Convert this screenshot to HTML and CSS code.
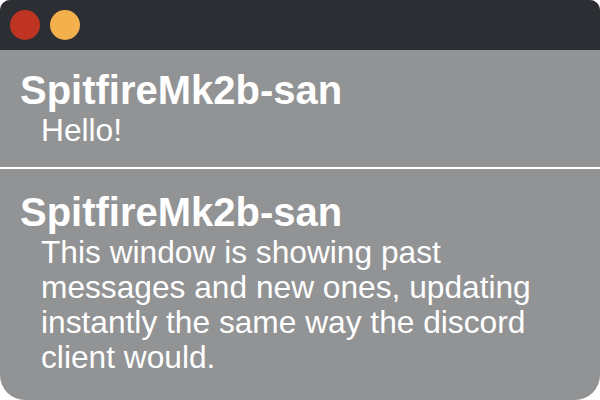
FILE: index.html
```html
<!DOCTYPE html>
<html>
<head>
<meta charset="utf-8">
<link rel="stylesheet" href="styles.css">
</head>
<body>
<div class="window">
  <div class="titlebar">
    <span class="dot dot-red"></span>
    <span class="dot dot-yellow"></span>
  </div>
  <div class="messages">
    <div class="message">
      <div class="author">SpitfireMk2b-san</div>
      <div class="text">Hello!</div>
    </div>
    <div class="message">
      <div class="author">SpitfireMk2b-san</div>
      <div class="text">This window is showing past messages and new ones, updating instantly the same way the discord client would.</div>
    </div>
  </div>
</div>
</body>
</html>
```
FILE: styles.css
```css
html, body {
  margin: 0;
  padding: 0;
  background: #ffffff;
}
.window {
  width: 600px;
  height: 400px;
  display: flex;
  flex-direction: column;
  border-radius: 10px 10px 25px 25px;
  overflow: hidden;
  background: #929395;
  font-family: "Liberation Sans", Arial, sans-serif;
  color: #ffffff;
}
.titlebar {
  height: 50px;
  flex: none;
  background: #2d2e33;
  display: flex;
  align-items: center;
  gap: 10px;
  padding-left: 10px;
}
.dot {
  width: 30px;
  height: 30px;
  border-radius: 50%;
}
.dot-red { background: #bf3322; }
.dot-yellow { background: #f3b04c; }
.messages {
  display: flex;
  flex-direction: column;
}
.message {
  padding: 17px 45px 19px 20px;
}
.message + .message {
  border-top: 2px solid #ffffff;
  padding-top: 20px;
}
.author {
  font-weight: bold;
  font-size: 40px;
  line-height: 46px;
}
.text {
  font-size: 31.7px;
  line-height: 35px;
  margin-left: 21px;
}
```
